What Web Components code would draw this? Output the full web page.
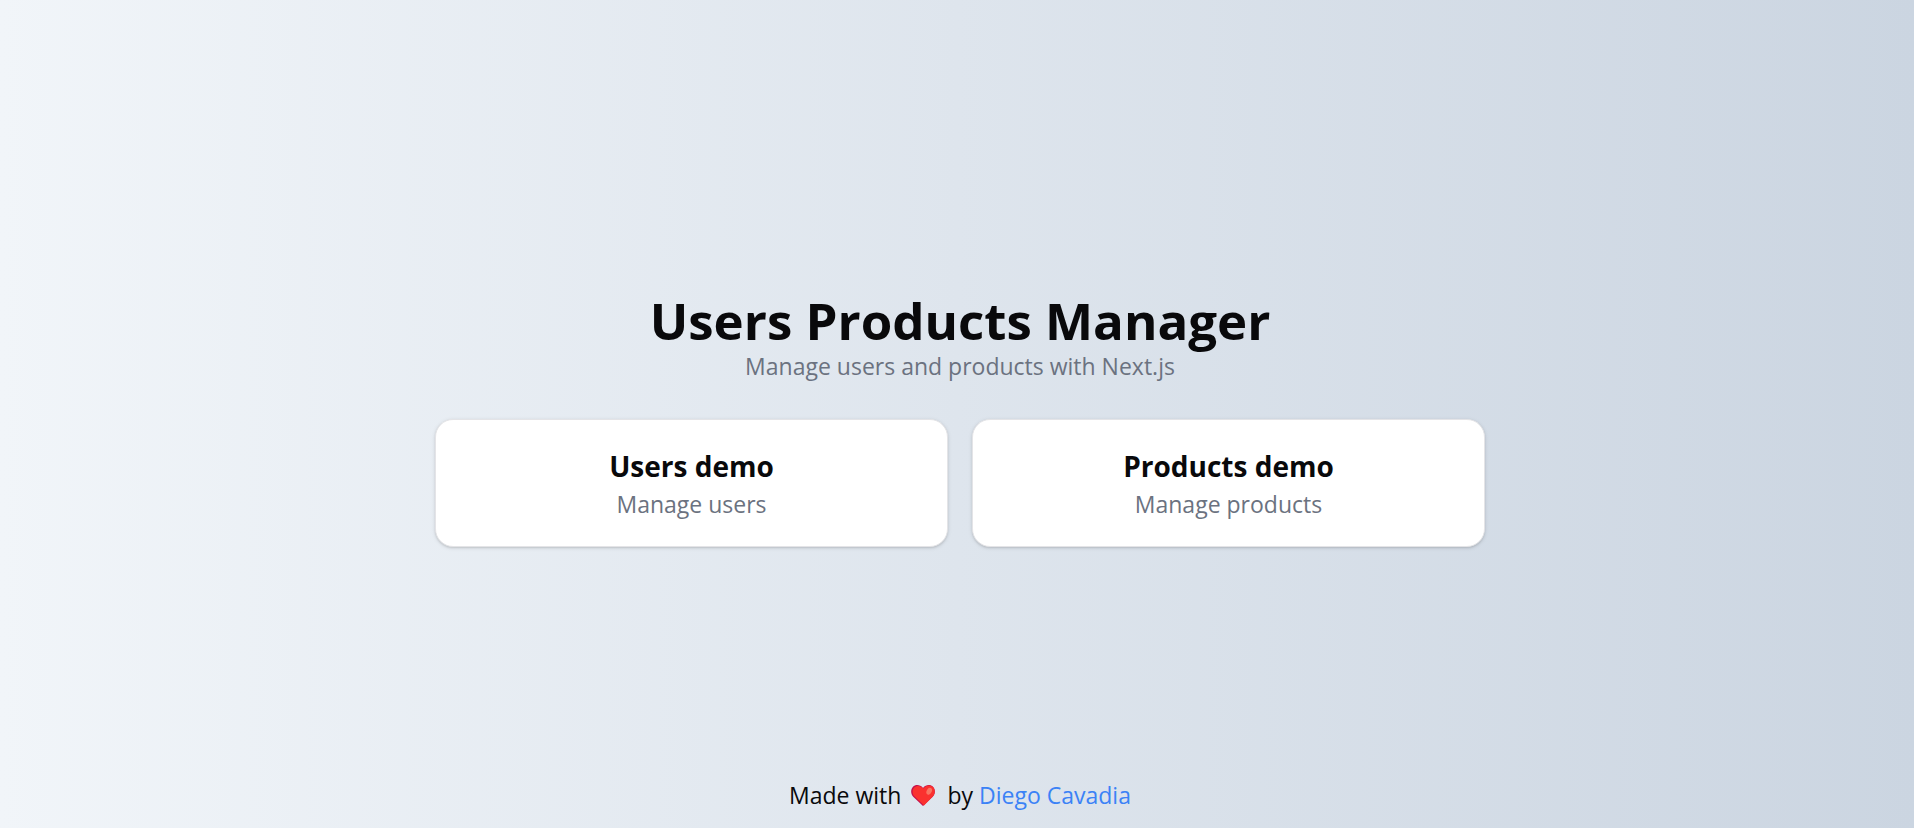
<!DOCTYPE html>
<html lang="en">
<head>
<meta charset="utf-8">
<title>Users Products Manager</title>
<style>
html, body { margin: 0; }
body { font-family: "Open Sans", "Noto Sans", sans-serif; color: #09090b; }
</style>
</head>
<body>
<home-page></home-page>
<script>
const define = (name, html) => customElements.define(name, class extends HTMLElement {
  constructor() {
    super();
    this.attachShadow({ mode: 'open' }).innerHTML = html;
  }
});

define('page-heading', `
<style>
:host { display: block; text-align: center; }
h1 { margin: 0; font-size: 51px; line-height: 60px; font-weight: 700; color: #09090b; }
p { margin: 0; font-size: 23px; line-height: 32px; color: #6b7280; }
</style>
<h1><slot></slot></h1><p><slot name="lead"></slot></p>`);

customElements.define('demo-card', class extends HTMLElement {
  constructor() {
    super();
    this.attachShadow({ mode: 'open' }).innerHTML = `
<style>
:host { display: block; }
a { display: block; box-sizing: border-box; padding: 26px 24px 24px; text-align: center; text-decoration: none; color: inherit;
  background: #fff; border: 1px solid #e4e4e7; border-radius: 18px; box-shadow: 0 1px 4px rgba(0,0,0,.1), 0 1px 2px rgba(0,0,0,.1); }
h2 { margin: 0; font-size: 28px; line-height: 40px; font-weight: 700; color: #09090b; }
p { margin: 0; font-size: 23px; line-height: 36px; color: #6b7280; }
</style>
<a><h2><slot></slot></h2><p><slot name="text"></slot></p></a>`;
  }
  connectedCallback() {
    this.shadowRoot.querySelector('a').href = this.getAttribute('href');
  }
});

define('heart-icon', `
<style>:host { display: inline-block; width: 24px; height: 21px; } svg { display: block; width: 100%; height: 100%; }</style>
<svg viewBox="0 0 24 21" aria-hidden="true">
<path d="M12 21L2.2 11.7C-.6 8.8-.3 4.200 1.800 2C4.500-.7 9-.6 12 3C15-.6 19.500-.7 22.200 2C24.500 4.400 24.500 8.800 21.800 11.700Z" fill="#c5114c"/>
<path d="M13 20.600L3.600 11.600C1 8.800 1 4.800 3.200 2.500C5.500.2 9.700.3 12.400 3.500C15-.1 19.300-.5 22 2C24.400 4.400 24.300 8.700 21.700 11.500Z" fill="#fa312f"/>
<ellipse cx="18.200" cy="6.200" rx="2.500" ry="3.600" transform="rotate(28 18.200 6.200)" fill="#f87462"/>
</svg>`);

define('page-footer', `
<style>
:host { display: flex; justify-content: center; align-items: center; padding-bottom: 15px; font-size: 23px; line-height: 36px; color: #09090b; }
heart-icon { margin: 0 12px 0 10px; }
a { color: #3b82f6; text-decoration: none; margin-left: 6px; }
</style>
<span>Made with</span><heart-icon></heart-icon><span>by</span><a href="#author">Diego Cavadia</a>`);

define('home-page', `
<style>
:host { display: grid; grid-template-rows: 1fr auto; min-height: 100vh; box-sizing: border-box; padding-left: 6px;
  background: linear-gradient(to right, #f1f5f9, #cbd5e1); }
main { display: flex; flex-direction: column; justify-content: center; align-items: center; gap: 37px; padding: 60px 24px 0; }
.cards { display: grid; grid-template-columns: 1fr 1fr; gap: 24px; width: 100%; max-width: 1050px; }
</style>
<main>
<page-heading>Users Products Manager<span slot="lead">Manage users and products with Next.js</span></page-heading>
<div class="cards">
<demo-card href="#users">Users demo<span slot="text">Manage users</span></demo-card>
<demo-card href="#products">Products demo<span slot="text">Manage products</span></demo-card>
</div>
</main>
<page-footer></page-footer>`);
</script>
</body>
</html>
